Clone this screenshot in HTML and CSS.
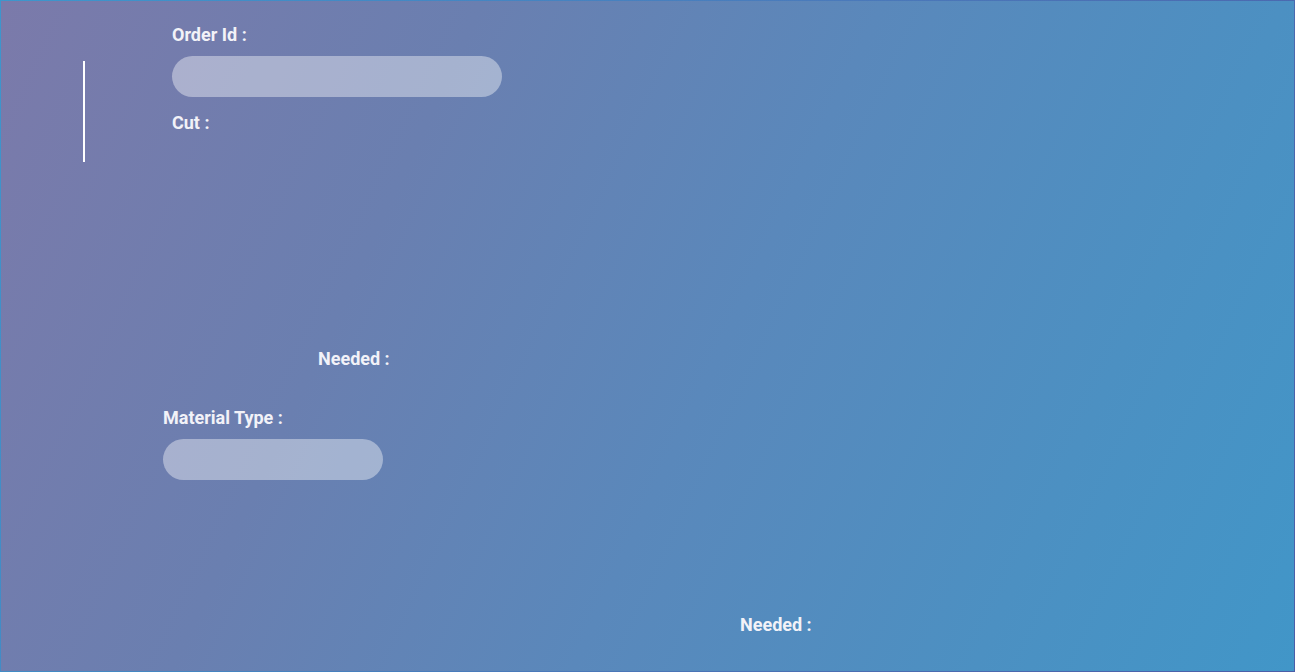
FILE: index.html
```html
<!DOCTYPE html>
<html>
<head>
<meta charset="utf-8">
<link rel="stylesheet" href="styles.css">
</head>
<body>
<div class="frame">
  <div class="top">
    <div class="bar"></div>
    <div class="form">
      <div class="label">Order Id :</div>
      <div class="pill pill-wide"></div>
      <div class="label label-cut">Cut :</div>
    </div>
  </div>
  <div class="label needed1">Needed :</div>
  <div class="label material">Material Type :</div>
  <div class="pill pill-mat"></div>
  <div class="label needed2">Needed :</div>
</div>
</body>
</html>
```

FILE: styles.css
```css
html, body {
  margin: 0;
  padding: 0;
}
body {
  font-family: Roboto, "Liberation Sans", sans-serif;
}
.frame {
  width: 1295px;
  height: 672px;
  box-sizing: border-box;
  border: 1px solid transparent;
  background:
    linear-gradient(115deg, #7b7aaa 0%, #6a7fb0 30%, #5a88bb 55%, #4c90c2 80%, #4196c8 100%) padding-box,
    linear-gradient(115deg, #3d96cc 0%, #4a7bbb 50%, #4b5ea8 100%) border-box;
  display: flex;
  flex-direction: column;
  overflow: hidden;
}
.top {
  display: flex;
  align-items: flex-start;
}
.bar {
  width: 2px;
  height: 101px;
  background: #ffffff;
  margin-left: 82px;
  margin-top: 60px;
}
.form {
  margin-left: 87px;
  padding-top: 23px;
  display: flex;
  flex-direction: column;
}
.label {
  font-size: 18px;
  font-weight: 700;
  line-height: 21px;
  color: #f2f2f8;
  white-space: nowrap;
}
.pill {
  height: 41px;
  border-radius: 20.5px;
  background: rgba(255, 255, 255, 0.4);
}
.pill-wide {
  width: 330px;
  margin-top: 11px;
}
.label-cut {
  margin-top: 15px;
}
.needed1 {
  margin-left: 317px;
  margin-top: 186px;
}
.material {
  margin-left: 162px;
  margin-top: 38px;
}
.pill-mat {
  width: 220px;
  margin-left: 162px;
  margin-top: 11px;
}
.needed2 {
  margin-left: 739px;
  margin-top: 134px;
}
```
